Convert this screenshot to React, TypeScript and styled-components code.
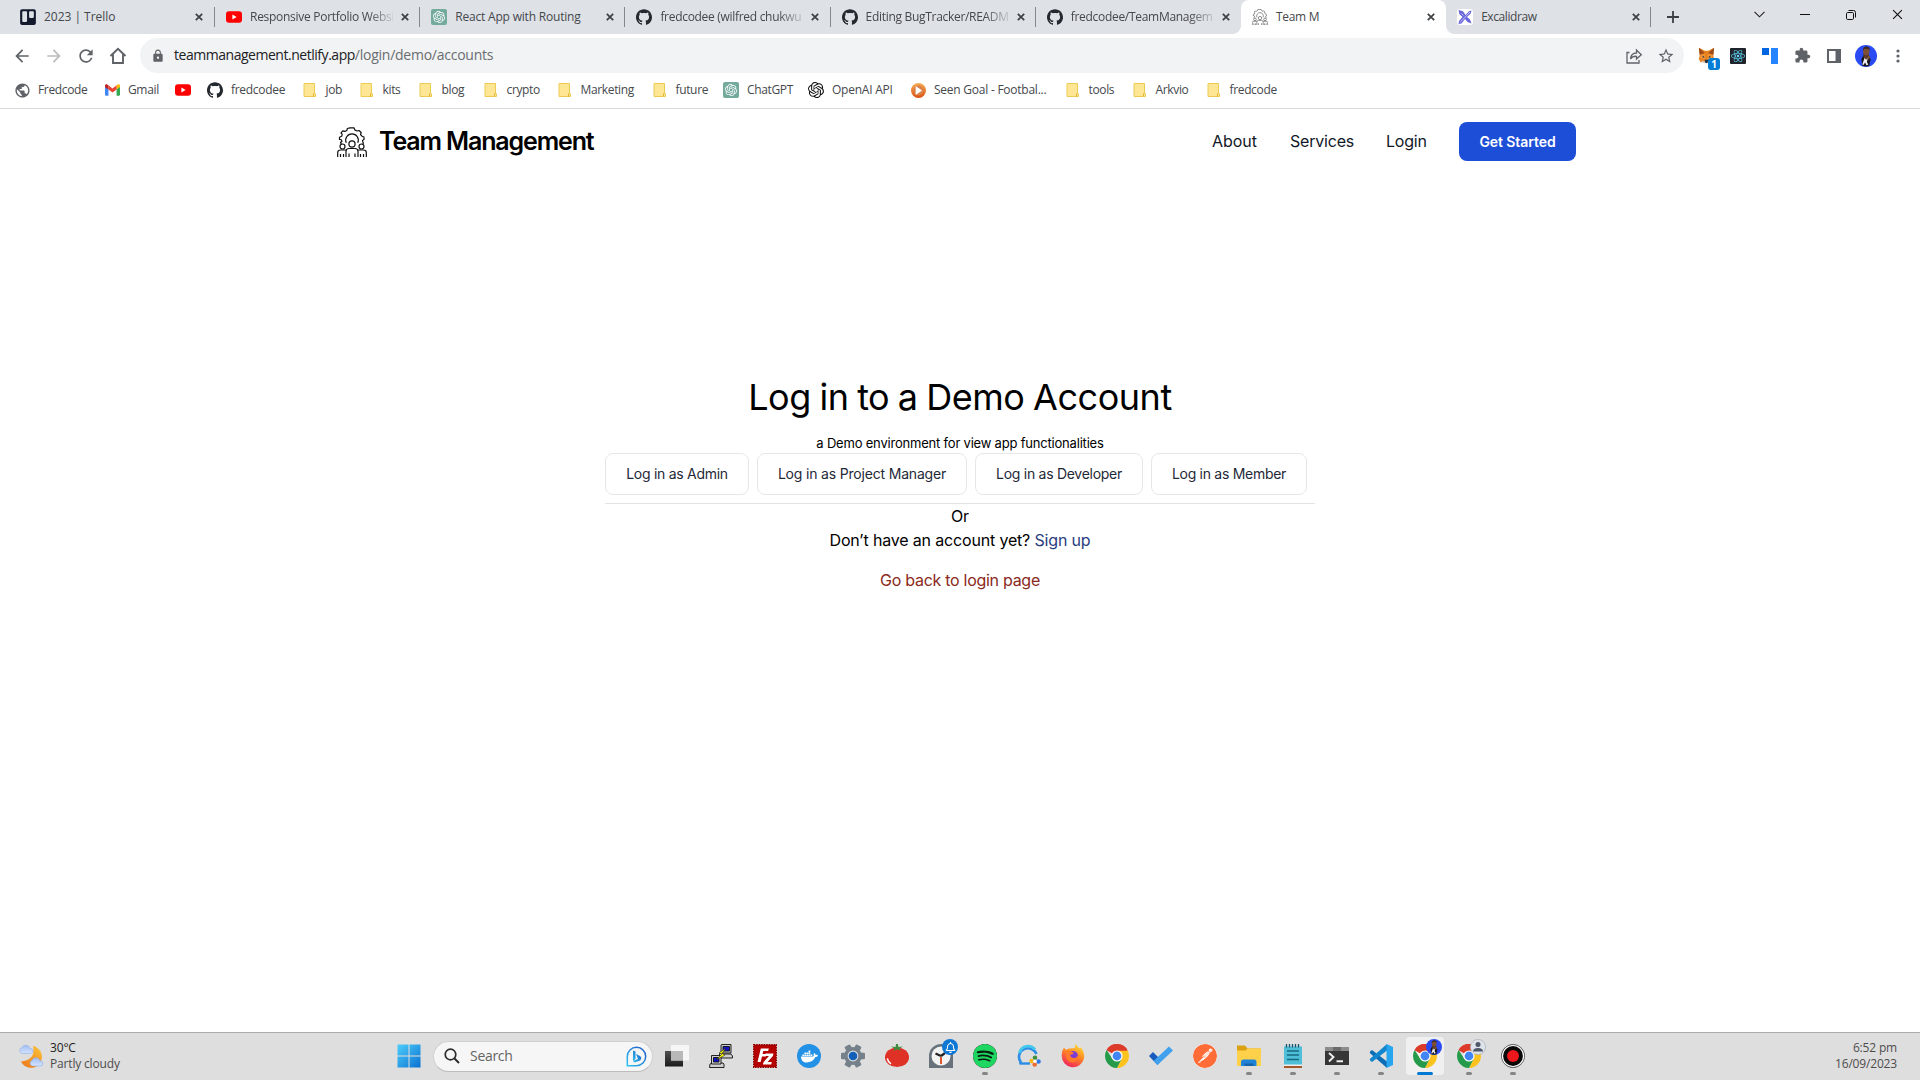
import React from "react";
import styled, { createGlobalStyle } from "styled-components";
import { FaDocker, FaReact, FaRegBell, FaTrello } from "react-icons/fa";
import { SiGithub, SiOpenai, SiPostman, SiSpotify } from "react-icons/si";
import { MdArrowBack, MdArrowForward, MdExtension, MdLock, MdPublic, MdRefresh, MdStarBorder } from "react-icons/md";

const ui = `"Open Sans", "Noto Sans", sans-serif`;

const Global = createGlobalStyle`
  * { box-sizing: border-box; }
  body { margin: 0; background: #fff; overflow: hidden; }
  svg { display: block; flex: none; }
`;

const Screen = styled.div`
  width: 1920px;
  height: 1080px;
  display: flex;
  flex-direction: column;
  font-family: ${ui};
  background: #fff;
`;

/* ---------- browser chrome ---------- */
const TabStrip = styled.div`
  height: 34px;
  flex: none;
  display: flex;
  background: #dee1e6;
  padding-left: 9px;
`;
const Tab = styled.div<{ $active?: boolean; $divider?: boolean }>`
  position: relative;
  width: 205.2px;
  flex: none;
  display: flex;
  align-items: center;
  padding-left: 11px;
  border-radius: 8px 8px 0 0;
  background: ${(p) => (p.$active ? "#fff" : "transparent")};
  &:first-child { width: 206px; }
  &::after {
    content: "";
    display: ${(p) => (p.$divider ? "block" : "none")};
    position: absolute;
    right: 0;
    top: 7px;
    width: 1px;
    height: 20px;
    background: #84878b;
  }
`;
const Corner = styled.i<{ $side: "left" | "right" }>`
  position: absolute;
  bottom: 0;
  ${(p) => p.$side}: -8px;
  width: 8px;
  height: 8px;
  background: radial-gradient(circle at ${(p) => (p.$side === "left" ? "0 0" : "100% 0")}, transparent 7.5px, #fff 8px);
`;
const TabTitle = styled.span<{ $fade?: boolean; $ls?: number }>`
  width: 143px;
  flex: none;
  margin-left: 8px;
  white-space: nowrap;
  font-size: 12px;
  line-height: 18px;
  letter-spacing: ${(p) => p.$ls ?? -0.3}px;
  color: #45484c;
  mask-image: ${(p) => (p.$fade ? "linear-gradient(90deg, #000 118px, rgba(0,0,0,.15) 143px)" : "none")};
`;
const CloseMark = styled.span`
  display: flex;
  flex: none;
  width: 16px;
  justify-content: center;
  margin-left: 4px;
`;
const NewTab = styled.div`
  width: 43px;
  display: flex;
  align-items: center;
  justify-content: center;
`;
const WindowControls = styled.div`
  margin-left: auto;
  display: flex;
  height: 29px;
`;
const WindowButton = styled.div`
  width: 46px;
  display: flex;
  align-items: center;
  justify-content: center;
`;
const Toolbar = styled.div`
  height: 39px;
  flex: none;
  display: flex;
  align-items: center;
  padding: 4px 6px 0;
  color: #5f6368;
`;
const ToolSlot = styled.div<{ $dim?: boolean }>`
  position: relative;
  width: 32px;
  height: 34px;
  display: flex;
  align-items: center;
  justify-content: center;
  color: ${(p) => (p.$dim ? "#babcbe" : "#5f6368")};
`;
const AddressBar = styled.div`
  width: 1544px;
  height: 35px;
  margin: 0 6px;
  border-radius: 18px;
  background: #f1f3f4;
  display: flex;
  align-items: center;
  padding: 0 2px 0 11px;
`;
const Url = styled.span`
  margin-left: 9px;
  font-size: 14px;
  letter-spacing: -0.25px;
  line-height: 20px;
  padding-bottom: 1px;
  color: #6a6d71;
  flex: 1;
  b { font-weight: 400; color: #202124; letter-spacing: -0.47px; }
`;
const CountBadge = styled.span`
  position: absolute;
  left: 18px;
  top: 19px;
  width: 12px;
  height: 12px;
  border-radius: 3px;
  background: #037dd6;
  color: #fff;
  font: 700 10px/12px "Open Sans", sans-serif;
  text-align: center;
`;
const Bookmarks = styled.div`
  height: 36px;
  flex: none;
  display: flex;
  align-items: center;
  padding: 0 0 1px 14px;
  border-bottom: 1px solid #d8dadd;
`;
const Bookmark = styled.div<{ $w: number; $ls?: number }>`
  width: ${(p) => p.$w}px;
  flex: none;
  display: flex;
  align-items: center;
  gap: 8px;
  font-size: 12px;
  line-height: 18px;
  letter-spacing: ${(p) => p.$ls ?? -0.35}px;
  white-space: nowrap;
  color: #45484c;
`;
const IconBox = styled.span`
  width: 16px;
  display: flex;
  justify-content: center;
  flex: none;
`;

/* ---------- page ---------- */
const Page = styled.div`
  flex: 1;
  display: flex;
  flex-direction: column;
  font-family: Inter, "Open Sans", sans-serif;
  color: #000;
`;
const Header = styled.header`
  height: 65px;
  flex: none;
  display: flex;
  align-items: center;
  padding: 0 344px 0 337px;
`;
const Brand = styled.h1`
  margin: 0 auto 0 12px;
  padding-bottom: 1px;
  font-size: 25px;
  font-weight: 600;
  letter-spacing: -1.14px;
  line-height: 32px;
`;
const NavLink = styled.a<{ $w: number; $ls: number }>`
  width: ${(p) => p.$w}px;
  padding-bottom: 2px;
  font-size: 16px;
  font-weight: 400;
  line-height: 24px;
  letter-spacing: ${(p) => p.$ls}px;
  white-space: nowrap;
  color: #111827;
`;
const PrimaryButton = styled.button`
  width: 117px;
  height: 39px;
  border: 0;
  padding: 0;
  border-radius: 8px;
  background: #1d4ed8;
  color: #fff;
  font: 600 14px/20px Inter, sans-serif;
  letter-spacing: -0.08px;
`;
const Main = styled.main`
  width: 710px;
  margin: 200px auto 0;
  display: flex;
  flex-direction: column;
  align-items: center;
`;
const Title = styled.h2`
  margin: 0;
  font-size: 36px;
  font-weight: 400;
  line-height: 46px;
  letter-spacing: -0.45px;
  word-spacing: -1.1px;
  white-space: nowrap;
`;
const Subtitle = styled.p`
  margin: 13px 0 0;
  font-size: 13px;
  line-height: 20px;
  letter-spacing: -0.2px;
`;
const Accounts = styled.div`
  width: 100%;
  display: flex;
  gap: 8px;
  padding-bottom: 8px;
  border-bottom: 1px solid #e1e3e7;
`;
const AccountButton = styled.button<{ $w: number; $ls?: number }>`
  width: ${(p) => p.$w}px;
  height: 42px;
  padding: 0;
  border: 1px solid #e5e7eb;
  border-radius: 8px;
  background: #fff;
  color: #1f2937;
  font: 400 14px/20px Inter, sans-serif;
  letter-spacing: ${(p) => p.$ls ?? -0.28}px;
  white-space: nowrap;
`;
const Line = styled.p<{ $top?: number; $ls?: number }>`
  margin: ${(p) => p.$top ?? 0}px 0 0;
  font-size: 16px;
  line-height: 24px;
  letter-spacing: ${(p) => p.$ls ?? -0.17}px;
`;
const SignUp = styled.a`color: #293d80;`;
const Back = styled.a`color: #8a2a20;`;

/* ---------- taskbar ---------- */
const Taskbar = styled.footer`
  height: 48px;
  flex: none;
  display: flex;
  align-items: center;
  background: #dedede;
  border-top: 1px solid #acacac;
  padding: 0 23px 1px 18px;
`;
const Weather = styled.div`
  width: 372px;
  display: flex;
  align-items: center;
  gap: 6px;
`;
const SmallText = styled.div<{ $right?: boolean }>`
  padding-bottom: 1px;
  font-size: 12px;
  line-height: 16px;
  letter-spacing: -0.17px;
  text-align: ${(p) => (p.$right ? "right" : "left")};
  color: #4d4d4d;
  b { font-weight: 400; color: #1c1c1c; }
`;
const StartSlot = styled.div`
  width: 43px;
  padding-left: 7px;
`;
const SearchBox = styled.div`
  width: 220px;
  height: 31px;
  border-radius: 16px;
  background: #f6f6f6;
  border: 1px solid #d0d0d0;
  border-bottom-color: #bdbdbd;
  display: flex;
  align-items: center;
  padding: 0 5px 0 10px;
  font-size: 14px;
  line-height: 20px;
  letter-spacing: -0.3px;
  color: #646464;
`;
const SearchLabel = styled.span`
  flex: 1;
  margin-left: 10px;
`;
const Apps = styled.div`
  display: flex;
  margin-left: 2px;
`;
const AppSlot = styled.div<{ $state?: string }>`
  position: relative;
  width: 38px;
  height: 38px;
  margin: 0 3px;
  display: flex;
  align-items: center;
  justify-content: center;
  border-radius: 4px;
  background: ${(p) => (p.$state === "active" ? "#f0f0f0" : "transparent")};
  &::before {
    content: "";
    display: ${(p) => (p.$state ? "block" : "none")};
    position: absolute;
    bottom: 0;
    left: 50%;
    width: ${(p) => (p.$state === "active" ? 16 : 6)}px;
    height: 3px;
    border-radius: 2px;
    transform: translateX(-50%);
    background: ${(p) => (p.$state === "active" ? "#0078d4" : "#858585")};
  }
`;
const Disc = styled.span<{ $bg: string; $size?: number; $radius?: number }>`
  width: ${(p) => p.$size ?? 24}px;
  height: ${(p) => p.$size ?? 24}px;
  border-radius: ${(p) => p.$radius ?? 50}px;
  background: ${(p) => p.$bg};
  display: flex;
  align-items: center;
  justify-content: center;
  color: #fff;
`;
const Overlay = styled.span`
  position: absolute;
  right: 2px;
  top: 2px;
`;
const Clock = styled.div`margin-left: auto;`;

/* ---------- drawings ---------- */
const Svg = ({ s = 24, h, box = "0 0 24 24", children }: { s?: number; h?: number; box?: string; children: React.ReactNode }) => (
  <svg width={s} height={h ?? s} viewBox={box} fill="none">{children}</svg>
);

const Cross = ({ s = 8, w = 1.7, c = "#3c4043" }) => (
  <Svg s={s} box="0 0 10 10"><path d="M1 1l8 8M9 1l-8 8" stroke={c} strokeWidth={w * 10 / s} /></Svg>
);
const Folder = () => (
  <Svg s={16} box="0 0 16 16">
    <path d="M2 1.5h10.500V11l1 1v2.500H2z" fill="#ffe695" stroke="#eccb55" />
    <path d="M11.500 14.500V12l1-1" stroke="#e0b630" />
  </Svg>
);
const YouTube = () => (
  <Svg s={16} box="0 0 16 16">
    <rect y="2.300" width="16" height="11.400" rx="3" fill="#f00" />
    <path d="M6.400 5.500v5l4.200-2.500z" fill="#fff" />
  </Svg>
);
const Gmail = () => (
  <Svg s={15} h={12} box="0 0 24 18">
    <path d="M0 2.500V16a2 2 0 002 2h3.500V7z" fill="#4285f4" />
    <path d="M24 2.500V16a2 2 0 01-2 2h-3.500V7z" fill="#34a853" />
    <path d="M18.500 1.500V8L24 4V2.200C24 0 21.500-.7 20 .5z" fill="#fbbc04" />
    <path d="M5.500 1.500L12 6.400l6.500-4.900V8L12 12.800 5.500 8z" fill="#ea4335" />
    <path d="M0 2.200V4l5.500 4V1.500L4 .5C2.500-.7 0 0 0 2.200z" fill="#c5221f" />
  </Svg>
);
const TeamLogo = ({ s = 30, c = "#111" }) => (
  <svg width={s} height={s} viewBox="0 0 30 30" fill="none" stroke={c} strokeWidth={1.2} strokeLinejoin="round">
    <path d="M4.500 17.500L3.500 15.500L5 14.200L4 12.500H2.500V10.200L4.700 9.300L5.200 7.300L4 5.800L5.800 3.800L8 4.400L10 3.200L10.300 1.500L13 .8H17L17.800 2.900L20 4L22 3.500L24.200 5.500L23.500 7.500L25 9.200L27 10V12.600L25.500 13.500L25.800 15L26.500 16L25.500 17.500" />
    <path d="M9.300 15.800A6.300 6.300 0 1120.700 15.800" />
    <circle cx="15" cy="17" r="3.100" />
    <circle cx="5.500" cy="19.500" r="2.500" />
    <circle cx="24.500" cy="19.500" r="2.500" />
    <path d="M9 30v-5.500q0-3 3-3h6q3 0 3 3V30M12 26.500V30M18 26.500V30M9 23H3.500Q.7 23 .7 25.500V30M3.500 27v3M6.500 27v3M21 23h5.500q2.800 0 2.800 2.500V30M23.500 27v3M26.500 27v3" />
  </svg>
);
const Excalidraw = () => (
  <Svg s={16} box="0 0 16 16">
    <rect width="16" height="16" rx="3" fill="#fff" />
    <path d="M1.500 1l4.500 1.200L8.500 6 12 2.300l2.500-.8-.8 3L10 8l3 2.500 1.500 4-4-1.500L8 10l-3.500 4.500-3 .5.500-3L5.500 8 2.300 5z" fill="#6965db" />
    <path d="M3 13.500L13 3M4.500 4.500l2 2" stroke="#fff" strokeWidth=".6" />
  </Svg>
);
const Fox = () => (
  <Svg s={17} box="0 0 20 20">
    <path d="M1 1l7 3.500h4L19 1l-1 9 1 4-2 4-5-1-2 2-2-2-5 1-2-4 1-4z" fill="#e8821e" />
    <path d="M1 1l7 6-6 2zM19 1l-7 6 6 2z" fill="#9b4a1b" />
    <path d="M3 9.500l5-1 .5 6L3 13zM17 9.500l-5-1-.5 6L17 13z" fill="#f6983a" />
    <path d="M5.500 10l2.500 2-2.500.5zM14.500 10L12 12l2.500.5zM8 15h4v3l-2 1-2-1z" fill="#233447" />
    <path d="M5 16l3 1 .5 2L4 18zM15 16l-3 1-.5 2L16 18z" fill="#d7c1b3" />
  </Svg>
);
const Avatar = ({ s = 22 }) => (
  <Svg s={s}>
    <circle cx="12" cy="12" r="12" fill="#2a4bf3" />
    <path d="M8 22.500l-1-7 2-4h6l2 4-1.500 7.500q-4 1-7.500-.5z" fill="#15151c" />
    <path d="M9.500 8h5l1 5-3.500 3-3-3z" fill="#5a3828" />
    <ellipse cx="12.300" cy="6.800" rx="3.500" ry="4.300" fill="#7c4f36" />
    <path d="M8.800 6Q8.500 1.700 12.500 1.700T16 6l-1.500-2h-4z" fill="#3a2520" />
    <path d="M10.500 14l1.500 2 2-2-1 4.500 1.500 3-2 .5-1.500-3-2 3-1-1z" fill="#f1eef0" />
    <path d="M14 11.500l2.500 1-1 3.500-2-1z" fill="#7c4f36" />
  </Svg>
);
const Chrome = () => (
  <Svg>
    <path d="M12 12L1.610 6A12 12 0 0122.390 6z" fill="#dd3b2a" />
    <path d="M12 6.600H22.700A12 12 0 0112 24l4.700-9.300z" fill="#fcc31e" />
    <path d="M1.610 6A12 12 0 0122.700 6.600H12L7.300 9.300z" fill="#dd3b2a" />
    <path d="M1.610 6l5.700 8.700L12 17.400l4.500-2.500L12 24A12 12 0 011.610 6z" fill="#259a4a" />
    <circle cx="12" cy="12" r="5.600" fill="#fff" />
    <circle cx="12" cy="12" r="4.400" fill="#4285f4" />
  </Svg>
);
const PartlyCloudy = () => (
  <Svg s={26} h={24} box="0 0 26 24">
    <defs><linearGradient id="moon" x1="1" y1="0" x2=".2" y2="1"><stop stopColor="#fbc53a" /><stop offset="1" stopColor="#ee7c1c" /></linearGradient>
      <linearGradient id="cloud" x1="0" y1="0" x2="0" y2="1"><stop stopColor="#9fbdf3" /><stop offset="1" stopColor="#d5e3fc" /></linearGradient></defs>
    <path d="M15 2A11 11 0 113 17.500Q18 16 15 2z" fill="url(#moon)" />
    <path d="M4 9.500a3 3 0 01-.2-5.800Q5 1 8 1.200t3.800 3Q15 4.500 15 7t-3 2.500z" fill="url(#cloud)" stroke="#87a6e3" strokeWidth=".5" />
    <path d="M14 22a3 3 0 01-.2-5.500q1.200-3 4.200-2.800t3.800 2.800Q25 17 25 19.500T22 22z" fill="url(#cloud)" stroke="#87a6e3" strokeWidth=".5" />
  </Svg>
);
const WindowsLogo = () => (
  <Svg>
    <defs><linearGradient id="win" x1="0" y1="0" x2="24" y2="24" gradientUnits="userSpaceOnUse"><stop stopColor="#4fd0fb" /><stop offset="1" stopColor="#0a6fd0" /></linearGradient></defs>
    <path d="M.5.500h11v11H.5zM12.500.500h11v11h-11zM.5 12.500h11v11H.5zM12.500 12.500h11v11h-11z" fill="url(#win)" />
  </Svg>
);
const Bing = () => (
  <Svg s={21} box="0 0 21 21">
    <defs><linearGradient id="bing" x1="0" y1="1" x2="1" y2="0"><stop stopColor="#2dc3ee" /><stop offset="1" stopColor="#1d55c9" /></linearGradient></defs>
    <path d="M1.300 19.700V10.500a9.200 9.200 0 119.200 9.200z" stroke="url(#bing)" strokeWidth="1.500" />
    <path d="M7 4.500l2.500 1V13l-2.500 2zM10 8l4 2q1.800 1 1.200 3-.7 2-3 2.300L8.500 16.500 7 15l5-2z" fill="url(#bing)" />
  </Svg>
);
const TaskView = () => (
  <Svg>
    <defs><linearGradient id="tv" x1="0" y1="0" x2="0" y2="1"><stop stopColor="#505050" /><stop offset="1" stopColor="#1b1b1b" /></linearGradient></defs>
    <path d="M0 7h18v15.500H0z" fill="url(#tv)" />
    <path d="M6 1h18v15.500H6z" fill="#fafafa" fillOpacity=".85" />
    <path d="M6 7h12v9.500H6z" fill="#b8b8b8" />
  </Svg>
);
const Putty = () => (
  <Svg>
    <g stroke="#111" strokeWidth=".9">
      <path d="M11 9l3 1h8l1.500 2v2H10v-2z" fill="#ccc" /><path d="M12 1l1-.5h9V9H12z" fill="#c8c8c8" />
      <path d="M14 2.500h6.500V7H14z" fill="#11c" /><path d="M1 20l2-1h11l1 1v3.500H.5z" fill="#d0d0d0" />
      <path d="M2.500 11.500h9.500V20H2.500z" fill="#d0d0d0" /><path d="M4.500 13.500H10V18H4.500z" fill="#11c" />
      <path d="M17 4l-7 5 3 1-6 6 9-5-3-1.500z" fill="#ff0" strokeWidth=".5" />
    </g>
  </Svg>
);
const FileZilla = () => (
  <Svg>
    <rect x=".7" y=".7" width="22.600" height="22.600" fill="#b50000" stroke="#8d0000" strokeWidth="1.400" strokeDasharray="1.500 1" />
    <path d="M4.500 18L7.800 4.500h8L15.200 7H10.300L9.500 10h4l-.6 2.500H9L7.600 18zM12.500 9.500h8l-.6 2.500-5.300 6h4.200l-.6 2.500H10l.6-2.500 5.300-6h-4z" fill="#fff" />
  </Svg>
);
const Gear = () => (
  <Svg>
    <g fill="#76808b">
      {[0, 60, 120].map((r) => <rect key={r} x="8.800" y="0" width="6.400" height="24" rx="1.300" transform={`rotate(${r + 30} 12 12)`} />)}
      <circle cx="12" cy="12" r="9" />
    </g>
    <circle cx="12" cy="12" r="5.400" fill="#d9dde1" /><circle cx="12" cy="12" r="4.300" fill="#1260b8" />
  </Svg>
);
const Tomato = () => (
  <Svg>
    <ellipse cx="12" cy="13.200" rx="12" ry="9.800" fill="#e03127" />
    <path d="M11 0h2l.4 3 4.600-.5-3.500 2 1.500 2.500-4-1.700L8.500 7l1-2.500-3.500-2 4.600.5z" fill="#3e8b3e" />
    <path d="M2.500 15q.7 3 3 4.500" stroke="#fff" strokeWidth="1.500" strokeLinecap="round" />
  </Svg>
);
const ClockApp = () => (
  <Svg>
    <path d="M0 24V12a12 12 0 0124 0v12z" fill="#68727c" /><circle cx="12" cy="12" r="9.500" fill="#f3f3f3" />
    <path d="M12 12L6.500 9.500M12 12l4-3" stroke="#222" strokeWidth="2.200" /><path d="M12 13v7" stroke="#e1572d" strokeWidth="2" />
  </Svg>
);
const SearchChat = () => (
  <Svg>
    <path d="M3.500 19.500V17.500A9 8.500 0 1119.500 10" stroke="#2b8de6" strokeWidth="2.600" />
    <path d="M2.500 19.500H13" stroke="#2b8de6" strokeWidth="2.400" />
    <path d="M2.500 9A8.700 8.500 0 0118 5.500" stroke="#44c7ec" strokeWidth="2.800" />
    <circle cx="18" cy="13.700" r="2.300" fill="#3f8f3c" /><circle cx="21.500" cy="17.500" r="2.300" fill="#2f78e4" /><circle cx="17.700" cy="20.500" r="2.300" fill="#ee6c2c" /><circle cx="14.500" cy="17" r="2.300" fill="#f7b51b" />
    <circle cx="18" cy="17.200" r="1.700" fill="#fff" />
  </Svg>
);
const Firefox = () => (
  <Svg>
    <defs><linearGradient id="ff" x1=".8" y1="0" x2=".3" y2="1"><stop stopColor="#ffe23a" /><stop offset=".45" stopColor="#ff8a22" /><stop offset="1" stopColor="#ee2260" /></linearGradient></defs>
    <path d="M3 3.500L5 6q2-2 4-1.500L14 4q-.5-2.500 1-4 1 3 4 4.500l.5-1.500Q24 8 23 14.500A11.300 11.300 0 01.700 12Q.5 7 3 3.500z" fill="url(#ff)" />
    <circle cx="12" cy="12" r="5" fill="#7a3bd8" />
    <path d="M5 8q3-2 6 0l2 .7q-1 2-4 2.300 1 3.500 4.500 3t3.500-4q2.500 6-3.500 8T5 13z" fill="#ff7a2a" />
  </Svg>
);
const Todo = () => (
  <Svg><path d="M0 12l4-4 8.500 8.500L8.500 21z" fill="#185abd" /><path d="M8.500 21l-4-4L20 2.500l4 4z" fill="#41a1ee" /></Svg>
);
const Explorer = () => (
  <Svg>
    <path d="M0 1.500h8l2.500 3H24v8H0z" fill="#dca013" /><path d="M0 6.500h8.500l2-2H24V22H0z" fill="#ffd04a" />
    <path d="M4 22v-4q0-2.500 2.500-2.500h10.500q2.500 0 2.500 2.500v4z" fill="#1f84d8" /><path d="M7.500 19.500h9V22h-9z" fill="#1764ad" />
  </Svg>
);
const Notepad = () => (
  <Svg>
    <path d="M3 2.500h18V21H3z" fill="#4fbfd9" /><path d="M3 21.500h18V24H3z" fill="#a5562a" /><path d="M3 20.500h18v1.500H3z" fill="#eee" />
    <path d="M6 7h12M6 11h12M6 15.500h12" stroke="#17697f" strokeWidth="1.500" />
    <path d="M5.500 0v3.500M8.500 0v3.500M11.500 0v3.500M14.500 0v3.500M17.500 0v3.500" stroke="#17506a" strokeWidth="1.300" />
  </Svg>
);
const Terminal = () => (
  <Svg>
    <path d="M0 3h24v18H0z" fill="#363636" /><path d="M0 3h24v4H0z" fill="#8c8c8c" /><path d="M8 3h8v4H8z" fill="#6b6b6b" />
    <path d="M4 9l4.500 4L4 17.500M11.500 17.200H18" stroke="#eee" strokeWidth="1.900" />
  </Svg>
);
const VsCode = () => (
  <Svg>
    <path d="M1 7.500l2-1.500L18 17.500V24L.8 9z" fill="#0b6db5" /><path d="M1 16.500L3 18 18 6.500V0L.8 15z" fill="#1285cf" />
    <path d="M17.500 0L24 3v18l-6.500 3z" fill="#27a5ee" />
  </Svg>
);
const Person = () => (
  <Svg s={16} box="0 0 16 16"><circle cx="8" cy="8" r="7.600" fill="#dfe3ea" stroke="#aab0bb" strokeWidth=".7" /><circle cx="8" cy="5.500" r="2.500" fill="#4d586b" /><path d="M3 12.500Q3 9 8 9t5 3.500z" fill="#4d586b" /></Svg>
);
const Recorder = () => (
  <Svg><circle cx="12" cy="12" r="11.500" fill="#080808" stroke="#666" /><circle cx="12" cy="12" r="10.500" stroke="#fff" strokeWidth="1.200" /><circle cx="12" cy="12" r="6" fill="#ee171c" /></Svg>
);
const SeenGoal = () => (
  <Svg s={15} box="0 0 16 16">
    <defs><linearGradient id="sg" x1="0" y1="0" x2="0" y2="1"><stop stopColor="#f5ad55" /><stop offset="1" stopColor="#dd4f10" /></linearGradient></defs>
    <circle cx="8" cy="8" r="8" fill="url(#sg)" /><circle cx="8" cy="8" r="5.300" fill="#d9824a" /><path d="M5 3.300L11.800 8 5 12.700z" fill="#fff" />
  </Svg>
);
const GptTile = () => <Disc $bg="#74aa9c" $size={16} $radius={2}><SiOpenai size={12} /></Disc>;

/* ---------- data ---------- */
const gh = <SiGithub size={16} color="#24292f" />;
const tabs = [
  { icon: <FaTrello size={18} color="#131a2e" />, title: "2023 | Trello", divider: true, ls: -0.03 },
  { icon: <YouTube />, title: "Responsive Portfolio Websi", divider: true, fade: true, ls: -0.28 },
  { icon: <GptTile />, title: "React App with Routing", divider: true, ls: -0.19 },
  { icon: gh, title: "fredcodee (wilfred chukwu", divider: true, fade: true },
  { icon: gh, title: "Editing BugTracker/READM", divider: true, fade: true },
  { icon: gh, title: "fredcodee/TeamManagem", fade: true },
  { icon: <TeamLogo s={16} c="#555" />, title: "Team M", active: true },
  { icon: <Excalidraw />, title: "Excalidraw", divider: true, ls: -0.42 },
];
const bookmarks = [
  { w: 90, icon: <MdPublic size={17} color="#5f6368" />, label: "Fredcode" },
  { w: 71, icon: <Gmail />, label: "Gmail" },
  { w: 32, icon: <YouTube />, label: "" },
  { w: 94.5, icon: gh, label: "fredcodee", ls: -0.3 },
  { w: 57, icon: <Folder />, label: "job" },
  { w: 59, icon: <Folder />, label: "kits" },
  { w: 65, icon: <Folder />, label: "blog" },
  { w: 74, icon: <Folder />, label: "crypto" },
  { w: 95, icon: <Folder />, label: "Marketing" },
  { w: 71.5, icon: <Folder />, label: "future" },
  { w: 85, icon: <GptTile />, label: "ChatGPT" },
  { w: 102, icon: <SiOpenai size={16} color="#111" />, label: "OpenAI API", ls: -0.24 },
  { w: 154.5, icon: <SeenGoal />, label: "Seen Goal - Footbal...", ls: -0.24 },
  { w: 67, icon: <Folder />, label: "tools" },
  { w: 74, icon: <Folder />, label: "Arkvio" },
  { w: 80, icon: <Folder />, label: "fredcode" },
];
const apps: { icon: React.ReactNode; state?: string; over?: React.ReactNode }[] = [
  { icon: <TaskView /> },
  { icon: <Putty /> },
  { icon: <FileZilla /> },
  { icon: <Disc $bg="#2391e6"><FaDocker size={17} /></Disc> },
  { icon: <Gear /> },
  { icon: <Tomato /> },
  { icon: <ClockApp />, over: <Disc $bg="#0f78d4" $size={16}><FaRegBell size={11} /></Disc> },
  { icon: <SiSpotify size={24} color="#1ed760" style={{ background: "#0b1f10", borderRadius: "50%" }} />, state: "open" },
  { icon: <SearchChat /> },
  { icon: <Firefox /> },
  { icon: <Chrome /> },
  { icon: <Todo /> },
  { icon: <SiPostman size={24} color="#ff6c37" style={{ background: "#fff", borderRadius: "50%" }} /> },
  { icon: <Explorer />, state: "open" },
  { icon: <Notepad />, state: "open" },
  { icon: <Terminal />, state: "open" },
  { icon: <VsCode />, state: "open" },
  { icon: <Chrome />, state: "active", over: <Avatar s={16} /> },
  { icon: <Chrome />, state: "open", over: <Person /> },
  { icon: <Recorder />, state: "open" },
];

export default function App() {
  return (
    <Screen>
      <Global />
      <TabStrip>
        {tabs.map((t, i) => (
          <Tab key={i} $active={t.active} $divider={t.divider}>
            {t.active && <><Corner $side="left" /><Corner $side="right" /></>}
            <IconBox>{t.icon}</IconBox>
            <TabTitle $fade={t.fade} $ls={t.ls}>{t.title}</TabTitle>
            <CloseMark><Cross /></CloseMark>
          </Tab>
        ))}
        <NewTab><Svg s={12} box="0 0 12 12"><path d="M6 0v12M0 6h12" stroke="#3c4043" strokeWidth="1.800" /></Svg></NewTab>
        <WindowControls>
          <WindowButton><Svg s={11} h={7} box="0 0 11 7"><path d="M.5.800l5 5 5-5" stroke="#222" strokeWidth="1.100" /></Svg></WindowButton>
          <WindowButton><Svg s={10} h={2} box="0 0 10 2"><path d="M0 .5h10" stroke="#111" /></Svg></WindowButton>
          <WindowButton><Svg s={10} box="0 0 10 10"><rect x=".5" y="2.500" width="7" height="7" rx="1.200" stroke="#111" /><path d="M2.500.500h5q2 0 2 2v5" stroke="#111" /></Svg></WindowButton>
          <WindowButton><Cross s={11} w={1.1} c="#111" /></WindowButton>
        </WindowControls>
      </TabStrip>
      <Toolbar>
        <ToolSlot><MdArrowBack size={20} /></ToolSlot>
        <ToolSlot $dim><MdArrowForward size={20} /></ToolSlot>
        <ToolSlot><MdRefresh size={20} /></ToolSlot>
        <ToolSlot><Svg s={18} box="0 0 18 18"><path d="M1.500 9L9 1.800 16.500 9M4 7.500V16h10V7.500" stroke="currentColor" strokeWidth="1.900" /></Svg></ToolSlot>
        <AddressBar>
          <MdLock size={14} />
          <Url><b>teammanagement.netlify.app</b>/login/demo/accounts</Url>
          <ToolSlot><Svg s={16} box="0 0 16 16"><path d="M3.500 4.500H1v10.500h12v-3M4.500 11q.5-6 6-6V2l4.800 4.700L10.500 11V8.300Q6.500 8 4.500 11z" stroke="currentColor" strokeWidth="1.300" /></Svg></ToolSlot>
          <ToolSlot><MdStarBorder size={18} /></ToolSlot>
        </AddressBar>
        <ToolSlot><Fox /><CountBadge>1</CountBadge></ToolSlot>
        <ToolSlot><Disc $bg="#20232a" $size={16} $radius={1}><FaReact size={14} color="#61dafb" /></Disc></ToolSlot>
        <ToolSlot><Svg s={16} box="0 0 16 16"><path d="M0 0h7v7H0z" fill="#0065e0" /><path d="M9 0h7v16H9z" fill="#2684ff" /></Svg></ToolSlot>
        <ToolSlot><MdExtension size={17} /></ToolSlot>
        <ToolSlot><Svg s={14} box="0 0 14 14"><path d="M1 1h12v12H1z" stroke="#5f6368" strokeWidth="2" /><path d="M8.500 0H14v14H8.500z" fill="#5f6368" /></Svg></ToolSlot>
        <ToolSlot><Avatar /></ToolSlot>
        <ToolSlot><Svg s={4} h={14} box="0 0 4 14"><circle cx="2" cy="2" r="1.600" fill="#5f6368" /><circle cx="2" cy="7" r="1.600" fill="#5f6368" /><circle cx="2" cy="12" r="1.600" fill="#5f6368" /></Svg></ToolSlot>
      </Toolbar>
      <Bookmarks>
        {bookmarks.map((b, i) => <Bookmark key={i} $w={b.w} $ls={b.ls}><IconBox>{b.icon}</IconBox>{b.label}</Bookmark>)}
      </Bookmarks>
      <Page>
        <Header>
          <TeamLogo />
          <Brand>Team Management</Brand>
          <NavLink $w={78} $ls={-0.02}>About</NavLink>
          <NavLink $w={96} $ls={-0.2}>Services</NavLink>
          <NavLink $w={73} $ls={-0.2}>Login</NavLink>
          <PrimaryButton>Get Started</PrimaryButton>
        </Header>
        <Main>
          <Title>Log in to a Demo Account</Title>
          <Subtitle>a Demo environment for view app functionalities</Subtitle>
          <Accounts>
            <AccountButton $w={144}>Log in as Admin</AccountButton>
            <AccountButton $w={210} $ls={-0.18}>Log in as Project Manager</AccountButton>
            <AccountButton $w={168}>Log in as Developer</AccountButton>
            <AccountButton $w={156}>Log in as Member</AccountButton>
          </Accounts>
          <Line>Or</Line>
          <Line>Don’t have an account yet? <SignUp>Sign up</SignUp></Line>
          <Line $top={16} $ls={-0.28}><Back>Go back to login page</Back></Line>
        </Main>
      </Page>
      <Taskbar>
        <Weather>
          <PartlyCloudy />
          <SmallText><b>30°C</b><br />Partly cloudy</SmallText>
        </Weather>
        <StartSlot><WindowsLogo /></StartSlot>
        <SearchBox>
          <Svg s={16} box="0 0 16 16"><circle cx="6.500" cy="6.500" r="5.300" stroke="#2b2b2b" strokeWidth="1.700" /><path d="M10.500 10.500L15 15" stroke="#2b2b2b" strokeWidth="2" /></Svg>
          <SearchLabel>Search</SearchLabel>
          <Bing />
        </SearchBox>
        <Apps>
          {apps.map((a, i) => <AppSlot key={i} $state={a.state}>{a.icon}{a.over && <Overlay>{a.over}</Overlay>}</AppSlot>)}
        </Apps>
        <Clock><SmallText $right>6:52 pm<br />16/09/2023</SmallText></Clock>
      </Taskbar>
    </Screen>
  );
}
